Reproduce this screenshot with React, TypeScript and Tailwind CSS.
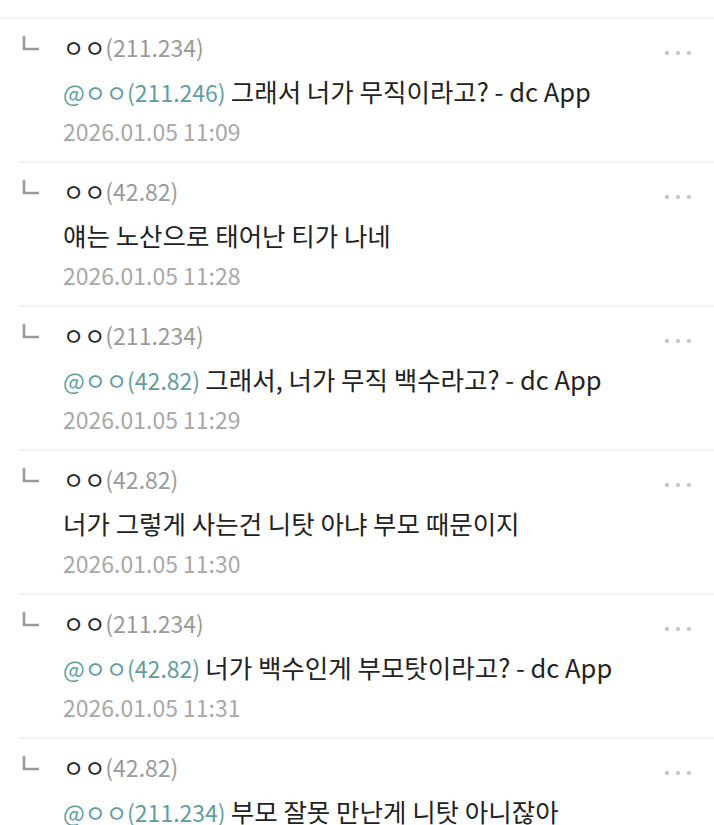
type Comment = {
  name: string;
  ip: string;
  mention?: string;
  text: string;
  date: string;
};

const comments: Comment[] = [
  { name: "ㅇㅇ", ip: "(211.234)", mention: "@ㅇㅇ(211.246)", text: "그래서 너가 무직이라고? - dc App", date: "2026.01.05 11:09" },
  { name: "ㅇㅇ", ip: "(42.82)", text: "얘는 노산으로 태어난 티가 나네", date: "2026.01.05 11:28" },
  { name: "ㅇㅇ", ip: "(211.234)", mention: "@ㅇㅇ(42.82)", text: "그래서, 너가 무직 백수라고? - dc App", date: "2026.01.05 11:29" },
  { name: "ㅇㅇ", ip: "(42.82)", text: "너가 그렇게 사는건 니탓 아냐 부모 때문이지", date: "2026.01.05 11:30" },
  { name: "ㅇㅇ", ip: "(211.234)", mention: "@ㅇㅇ(42.82)", text: "너가 백수인게 부모탓이라고? - dc App", date: "2026.01.05 11:31" },
  { name: "ㅇㅇ", ip: "(42.82)", mention: "@ㅇㅇ(211.234)", text: "부모 잘못 만난게 니탓 아니잖아", date: "2026.01.05 11:32" },
];

function ReplyMark() {
  return (
    <svg width="20" height="20" viewBox="0 0 20 20">
      <path d="M4 1 V14 H19" fill="none" stroke="#9a9a9a" strokeWidth="2.6" />
    </svg>
  );
}

function Dots() {
  return (
    <svg width="28" height="6" viewBox="0 0 28 6">
      <circle cx="3" cy="3" r="2.2" fill="#c8c8c8" />
      <circle cx="14" cy="3" r="2.2" fill="#c8c8c8" />
      <circle cx="25" cy="3" r="2.2" fill="#c8c8c8" />
    </svg>
  );
}

export default function App() {
  return (
    <div
      className="bg-white w-[714px] min-h-[825px] pt-[17px]"
      style={{ fontFamily: '"Noto Sans CJK KR", "Noto Sans", sans-serif' }}
    >
      {comments.map((c, i) => (
        <div key={i} className="h-[144px] overflow-hidden">
          <div className={`h-[2px] bg-[#f3f3f3] ${i === 0 ? "" : "ml-[18px]"}`} />
          <div className="flex pt-[13px]">
            <div className="w-[63px] pl-[20px] pt-[3px] shrink-0">
              <ReplyMark />
            </div>
            <div className="flex-1 min-w-0">
              <div className="h-[30px] text-[23px] leading-[30px] text-[#222]">
                {c.name}
                <span className="text-[#9a9a9a]">{c.ip}</span>
              </div>
              <div className="h-[36px] mt-[11px] text-[25.5px] leading-[36px] text-[#222] whitespace-nowrap">
                {c.mention && <span className="text-[23px] text-[#5f9ea0]">{c.mention} </span>}
                {c.text}
              </div>
              <div className="h-[30px] mt-[7px] text-[23px] leading-[30px] text-[#a8a8a8]">{c.date}</div>
            </div>
            <div className="w-[54px] shrink-0 pt-[18px] pl-[4px]">
              <Dots />
            </div>
          </div>
        </div>
      ))}
    </div>
  );
}
